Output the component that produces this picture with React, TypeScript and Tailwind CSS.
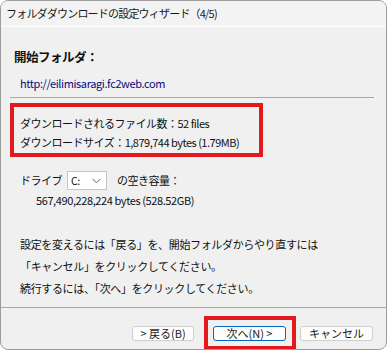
const font = { fontFamily: '"Noto Sans CJK JP", "Noto Sans", sans-serif' };

const Chevron = () => (
  <svg width="9" height="6" viewBox="0 0 9 6" className="text-[#606060]">
    <polyline points="0.5,0.8 4.5,4.8 8.5,0.8" fill="none" stroke="currentColor" strokeWidth="1" />
  </svg>
);

const Btn = ({ label, primary }: { label: string; primary?: boolean }) => (
  <button
    className={`w-full h-[15px] rounded-[3px] bg-[#fdfdfd] flex items-center justify-center text-[11px] leading-none text-[#1a1a1a] ${
      primary ? 'border border-[#0067c0]' : 'border border-[#cfcfcf]'
    }`}
  >
    {label}
  </button>
);

export default function App() {
  return (
    <div className="w-[389px] h-[351px] bg-white text-[#111]" style={font}>
      <div className="w-[387px] h-[350px] rounded-[8px] border border-[#9c9c9c] overflow-hidden flex flex-col bg-[#f0f0f0]">
        <div className="h-[26px] shrink-0 bg-[#f3f3f3] border-b border-white flex items-center pl-[5px] text-[11px] tracking-[-0.8px] text-[#1a1a1a]">
          フォルダダウンロードの設定ウィザード（4/5)
        </div>

        <div className="flex-1 flex flex-col">
          <div className="px-[9px]">
            <div className="mt-[22px] ml-[4px] leading-[16px] text-[12.5px] font-bold tracking-[-0.5px]">開始フォルダ：</div>
            <div className="mt-[10px] ml-[10px] leading-[16px] text-[11px] text-[#0a0a80] tracking-[-0.4px]">
              http://eilimisaragi.fc2web.com
            </div>
            <div className="mt-[6px] h-px w-[364px] bg-[#a8a8a8]" />

            <div className="mt-[5px] w-[253px] h-[54px] border-4 border-[#e3191e] pl-[6px] pt-[8px] text-[11px] tracking-[-0.5px]">
              <div className="leading-[16px]">ダウンロードされるファイル数：52 files</div>
              <div className="mt-[3px] leading-[16px]">ダウンロードサイズ：1,879,744 bytes (1.79MB)</div>
            </div>

            <div className="mt-[14px] ml-[10px] flex items-center h-[19px] text-[11px] tracking-[-0.5px]">
              <span className="w-[47px]">ドライブ</span>
              <div className="w-[40px] h-[19px] border border-[#c6c6c6] bg-white flex items-center justify-between pl-[3px] pr-[5px]">
                <span className="text-[10.5px]">C:</span>
                <Chevron />
              </div>
              <span className="ml-[10px]">の空き容量：</span>
            </div>
            <div className="mt-[2px] ml-[26px] leading-[16px] text-[11px] tracking-[-0.4px]">
              567,490,228,224 bytes (528.52GB)
            </div>

            <div className="mt-[25px] ml-[10px] text-[11px] leading-[22px] tracking-[-0.35px]">
              <div>設定を変えるには「戻る」を、開始フォルダからやり直すには</div>
              <div>「キャンセル」をクリックしてください。</div>
              <div>続行するには、「次へ」をクリックしてください。</div>
            </div>
          </div>

          <div className="mt-[8px] h-px bg-[#a8a8a8]" />

          <div className="mt-[8px] flex items-start justify-end pr-[13px]">
            <div className="mt-[10px] w-[62px]">
              <Btn label="> 戻る(B)" />
            </div>
            <div className="ml-[10px] w-[92px] h-[34px] border-4 border-[#e3191e] pt-[6px] pl-[5px]">
              <div className="w-[73px]">
                <Btn label="次へ(N) >" primary />
              </div>
            </div>
            <div className="mt-[10px] ml-[4px] w-[73px]">
              <Btn label="キャンセル" />
            </div>
          </div>
        </div>
      </div>
    </div>
  );
}
